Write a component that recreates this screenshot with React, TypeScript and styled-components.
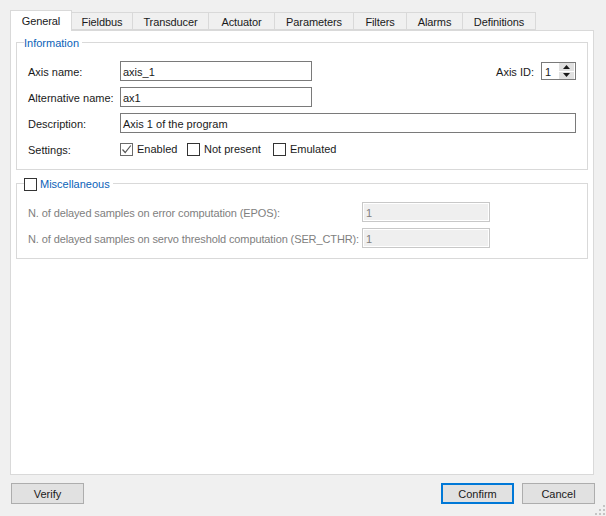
import React from 'react'
import styled, { createGlobalStyle } from 'styled-components'

const GlobalStyle = createGlobalStyle`
  html, body {
    margin: 0;
    padding: 0;
    background: #f0f0f0;
  }
  * {
    box-sizing: border-box;
  }
`

const Window = styled.div`
  position: relative;
  width: 606px;
  height: 516px;
  padding: 10px 12px 0 10px;
  display: flex;
  flex-direction: column;
  background: #f0f0f0;
  color: #1a1a1a;
  font-family: 'Liberation Sans', Arial, sans-serif;
  font-size: 11px;
  overflow: hidden;
`

const TabBar = styled.div`
  display: flex;
  align-items: flex-end;
  height: 20px;
  width: 526px;
`

const Tab = styled.div<{ $width: number; $active?: boolean }>`
  position: relative;
  z-index: ${props => (props.$active ? 1 : 0)};
  flex: none;
  width: ${props => props.$width}px;
  height: ${props => (props.$active ? 21 : 18)}px;
  margin-bottom: ${props => (props.$active ? -1 : 0)}px;
  display: flex;
  align-items: center;
  justify-content: center;
  padding-top: ${props => (props.$active ? 0 : 2)}px;
  padding-bottom: ${props => (props.$active ? 1 : 0)}px;
  letter-spacing: -0.1px;
  background: ${props => (props.$active ? '#ffffff' : '#f0f0f0')};
  border: 1px solid #d9d9d9;
  border-left-width: ${props => (props.$active ? 1 : 0)}px;
  border-bottom-width: ${props => (props.$active ? 0 : 1)}px;
`

const Pane = styled.div`
  flex: none;
  height: 445px;
  padding: 11px 5px 0;
  display: flex;
  flex-direction: column;
  gap: 13px;
  background: #ffffff;
  border: 1px solid #d9d9d9;
`

const Group = styled.div`
  padding: 0 11px 10px;
  border: 1px solid #d9d9d9;
`

const GroupTitle = styled.div`
  display: flex;
  align-items: center;
  gap: 3px;
  width: fit-content;
  height: 14px;
  margin: -7px 0 11px -4px;
  padding: 0 3px 0 0;
  background: #ffffff;
  color: #0a62b8;
`

const InfoGrid = styled.div`
  display: grid;
  grid-template-columns: 92px 192px 1fr auto;
  grid-auto-rows: 20px;
  row-gap: 6px;
  align-items: center;
`

const MiscGrid = styled.div`
  display: grid;
  grid-template-columns: 334px 128px;
  grid-auto-rows: 20px;
  row-gap: 6px;
  align-items: center;
`

const Label = styled.div<{ $disabled?: boolean }>`
  padding-top: 2px;
  white-space: nowrap;
  letter-spacing: ${props => (props.$disabled ? '-0.11px' : 'normal')};
  color: ${props => (props.$disabled ? '#808080' : 'inherit')};
`

const Input = styled.div<{ $span?: boolean }>`
  grid-column: ${props => (props.$span ? '2 / -1' : 'auto')};
  height: 20px;
  padding: 2px 0 0 2px;
  display: flex;
  align-items: center;
  background: #ffffff;
  border: 1px solid #7a7a7a;
`

const DisabledInput = styled.div`
  height: 20px;
  padding: 2px 0 0 3px;
  display: flex;
  align-items: center;
  color: #808080;
  background: #efefef;
  border: 1px solid #c8c8c8;
  box-shadow: inset 0 0 0 1px #ffffff;
`

const AxisId = styled.div`
  grid-column: 4;
  display: flex;
  align-items: center;
  gap: 7px;
`

const Spin = styled.div`
  width: 35px;
  height: 18px;
  padding: 1px 1px 1px 3px;
  display: flex;
  align-items: center;
  justify-content: space-between;
  background: #ffffff;
  border: 1px solid #7a7a7a;
`

const SpinValue = styled.span`
  padding-top: 2px;
`

const SpinButtons = styled.div`
  width: 15px;
  height: 16px;
  display: flex;
  flex-direction: column;
  gap: 1px;
`

const SpinButton = styled.div`
  flex: 1;
  display: flex;
  align-items: center;
  justify-content: center;
  background: #e1e1e1;
`

const Checks = styled.div`
  grid-column: 2 / -1;
  display: flex;
  align-items: center;
`

const CheckItem = styled.div<{ $width: number }>`
  width: ${props => props.$width}px;
  display: flex;
  align-items: center;
  gap: 4px;
`

const Box = styled.div<{ $checked?: boolean }>`
  flex: none;
  width: 13px;
  height: 13px;
  display: flex;
  align-items: center;
  justify-content: center;
  background: #ffffff;
  border: 1px solid ${props => (props.$checked ? '#6a6a6a' : '#333333')};
`

const Footer = styled.div`
  margin: 8px -1px 0 1px;
  display: flex;
  align-items: center;
  gap: 8px;
`

const Spacer = styled.div`
  flex: 1;
`

const Button = styled.div<{ $focused?: boolean }>`
  width: 73px;
  height: 21px;
  display: flex;
  align-items: center;
  justify-content: center;
  background: #e1e1e1;
  border: ${props => (props.$focused ? '2px solid #0078d7' : '1px solid #adadad')};
`

const Grip = styled.svg`
  position: absolute;
  right: 1px;
  bottom: 1px;
`

const TABS = [
  { name: 'General', width: 62 },
  { name: 'Fieldbus', width: 61 },
  { name: 'Transducer', width: 76 },
  { name: 'Actuator', width: 66 },
  { name: 'Parameters', width: 79 },
  { name: 'Filters', width: 53 },
  { name: 'Alarms', width: 56 },
  { name: 'Definitions', width: 73 },
]

function Check() {
  return (
    <svg width="11" height="11" viewBox="0 0 11 11">
      <path d="M1.5 5.5 L4.2 8.5 L9.8 1.5" fill="none" stroke="#555555" strokeWidth="1.2" />
    </svg>
  )
}

function Arrow({ up }: { up?: boolean }) {
  return (
    <svg width="7" height="4" viewBox="0 0 7 4">
      <path d={up ? 'M3.5 0 L7 4 L0 4 Z' : 'M0 0 L7 0 L3.5 4 Z'} fill="#1a1a1a" />
    </svg>
  )
}

function App() {
  return (
    <Window>
      <GlobalStyle />
      <TabBar>
        {TABS.map(({ name, width }, index) => (
          <Tab key={name} $width={width} $active={index === 0}>
            {name}
          </Tab>
        ))}
      </TabBar>
      <Pane>
        <Group>
          <GroupTitle>Information</GroupTitle>
          <InfoGrid>
            <Label>Axis name:</Label>
            <Input>axis_1</Input>
            <span />
            <AxisId>
              <Label>Axis ID:</Label>
              <Spin>
                <SpinValue>1</SpinValue>
                <SpinButtons>
                  <SpinButton>
                    <Arrow up />
                  </SpinButton>
                  <SpinButton>
                    <Arrow />
                  </SpinButton>
                </SpinButtons>
              </Spin>
            </AxisId>
            <Label>Alternative name:</Label>
            <Input>ax1</Input>
            <span />
            <span />
            <Label>Description:</Label>
            <Input $span>Axis 1 of the program</Input>
            <Label>Settings:</Label>
            <Checks>
              <CheckItem $width={67}>
                <Box $checked>
                  <Check />
                </Box>
                Enabled
              </CheckItem>
              <CheckItem $width={86}>
                <Box />
                Not present
              </CheckItem>
              <CheckItem $width={80}>
                <Box />
                Emulated
              </CheckItem>
            </Checks>
          </InfoGrid>
        </Group>
        <Group>
          <GroupTitle>
            <Box />
            Miscellaneous
          </GroupTitle>
          <MiscGrid>
            <Label $disabled>N. of delayed samples on error computation (EPOS):</Label>
            <DisabledInput>1</DisabledInput>
            <Label $disabled>N. of delayed samples on servo threshold computation (SER_CTHR):</Label>
            <DisabledInput>1</DisabledInput>
          </MiscGrid>
        </Group>
      </Pane>
      <Footer>
        <Button>Verify</Button>
        <Spacer />
        <Button $focused>Confirm</Button>
        <Button>Cancel</Button>
      </Footer>
      <Grip width="10" height="10" viewBox="0 0 10 10">
        <path d="M8 0h2v2H8zM4 4h2v2H4zM8 4h2v2H8zM0 8h2v2H0zM4 8h2v2H4zM8 8h2v2H8z" fill="#c4c4c4" />
      </Grip>
    </Window>
  )
}

export default App
